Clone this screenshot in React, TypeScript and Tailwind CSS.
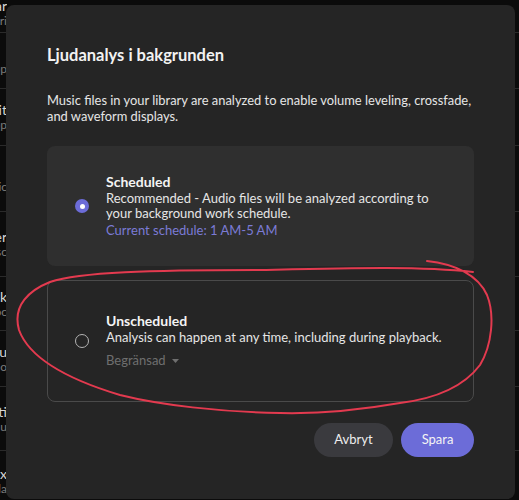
import React from 'react';

const rows = [
  { h: 'h-[39px]', title: 'Solar', sub: 'Libri' },
  { h: 'h-[56px]', title: '', sub: 'Pop' },
  { h: 'h-[57px]', title: 'Edit', sub: 'Pop' },
  { h: 'h-[66px]', title: '', sub: 'Music' },
  { h: 'h-[65px]', title: 'Her', sub: 'Disc' },
  { h: 'h-[54px]', title: 'Back', sub: 'Soc' },
  { h: 'h-[56px]', title: 'Seru', sub: 'Pho' },
  { h: 'h-[64px]', title: 'Aktiti', sub: 'Manu' },
  { h: 'h-[60px]', title: 'Mix', sub: 'Sida' },
];

const BackgroundList = () => (
  <div className="flex flex-col -mt-[6px]">
    {rows.map((r, i) => (
      <div
        key={i}
        className={`${r.h} border-b border-[#2a2a2a] flex flex-col justify-center overflow-hidden`}
      >
        <div className="w-[7px] overflow-hidden flex justify-end whitespace-nowrap text-[14px] leading-[15px] text-[#d6d6d6]">
          {r.title || '\u00a0'}
        </div>
        <div className="w-[7px] overflow-hidden flex justify-end whitespace-nowrap text-[12px] leading-[15px] text-[#7c7c7c]">
          {r.sub}
        </div>
      </div>
    ))}
  </div>
);

const Annotation = () => (
  <svg className="absolute left-0 top-0 pointer-events-none" width="519" height="500" viewBox="0 0 519 500" fill="none">
    <path
      d="M427 261 C455 264 478 275 487 295 C495 315 492 345 480 365 C465 385 440 398 400 403 C360 410 320 414 280 413 C220 412 160 405 120 395 C70 380 30 360 19 330 C12 305 30 290 50 282 C80 272 150 270 260 270 C350 268 420 266 473 272"
      stroke="#e33a4f"
      strokeWidth="2"
      strokeLinecap="round"
    />
  </svg>
);

export default function App() {
  return (
    <div
      className="relative w-[519px] h-[500px] overflow-hidden bg-[#0b0b0b]"
      style={{ fontFamily: 'Lato, "Open Sans", sans-serif' }}
    >
      <BackgroundList />

      <div className="absolute left-[6px] top-[5px] w-[509px] h-[494px] rounded-[8px] bg-[#252525] px-[41px] pt-[38px] flex flex-col text-[#ececec]">
        <h2 className="text-[16.5px] leading-[24px] font-bold text-[#f2f2f2]">Ljudanalys i bakgrunden</h2>

        <p className="mt-[26px] w-[434px] text-[12.9px] leading-[15.5px] text-[#e6e6e6]">
          Music files in your library are analyzed to enable volume leveling, crossfade, and waveform displays.
        </p>

        <div className="mt-[22px] h-[120px] rounded-[8px] bg-[#2f2f2f] pl-[28px] pr-[28px] flex items-center gap-[17px]">
          <div className="w-[14px] h-[14px] rounded-full bg-[#6c6cd8] flex items-center justify-center shrink-0">
            <div className="w-[5px] h-[5px] rounded-full bg-white" />
          </div>
          <div className="flex flex-col text-[13px] leading-[15.5px]">
            <span className="text-[14px] font-bold text-[#f4f4f4] mb-[1px]">Scheduled</span>
            <span className="text-[#e6e6e6]">
              Recommended - Audio files will be analyzed according to your background work schedule.
            </span>
            <span className="text-[#7b7bd6] mt-[1px]">Current schedule: 1 AM-5 AM</span>
          </div>
        </div>

        <div className="mt-[14px] h-[122px] rounded-[8px] border border-[#4a4a4a] pl-[27px] pr-[27px] flex items-center gap-[17px]">
          <div className="w-[14px] h-[14px] rounded-full border-[1.5px] border-[#b4b4b4] shrink-0" />
          <div className="flex flex-col text-[13px] leading-[15.5px]">
            <span className="text-[14px] font-bold text-[#f4f4f4] mb-[1px]">Unscheduled</span>
            <span className="text-[#e6e6e6]">Analysis can happen at any time, including during playback.</span>
            <span className="mt-[8px] flex items-center gap-[6px] text-[#6f6f6f]">
              Begränsad
              <svg width="7" height="4" viewBox="0 0 7 4">
                <path d="M0 0 L7 0 L3.5 4 Z" fill="#6f6f6f" />
              </svg>
            </span>
          </div>
        </div>

        <div className="mt-[21px] flex justify-end gap-[8px]">
          <button className="h-[34px] w-[79px] rounded-full bg-[#3a3a3e] text-[13px] text-[#eeeeee]">Avbryt</button>
          <button className="h-[34px] w-[73px] rounded-full bg-[#6c6cd8] text-[13px] text-[#f4f4f4]">Spara</button>
        </div>
      </div>

      <Annotation />
    </div>
  );
}
